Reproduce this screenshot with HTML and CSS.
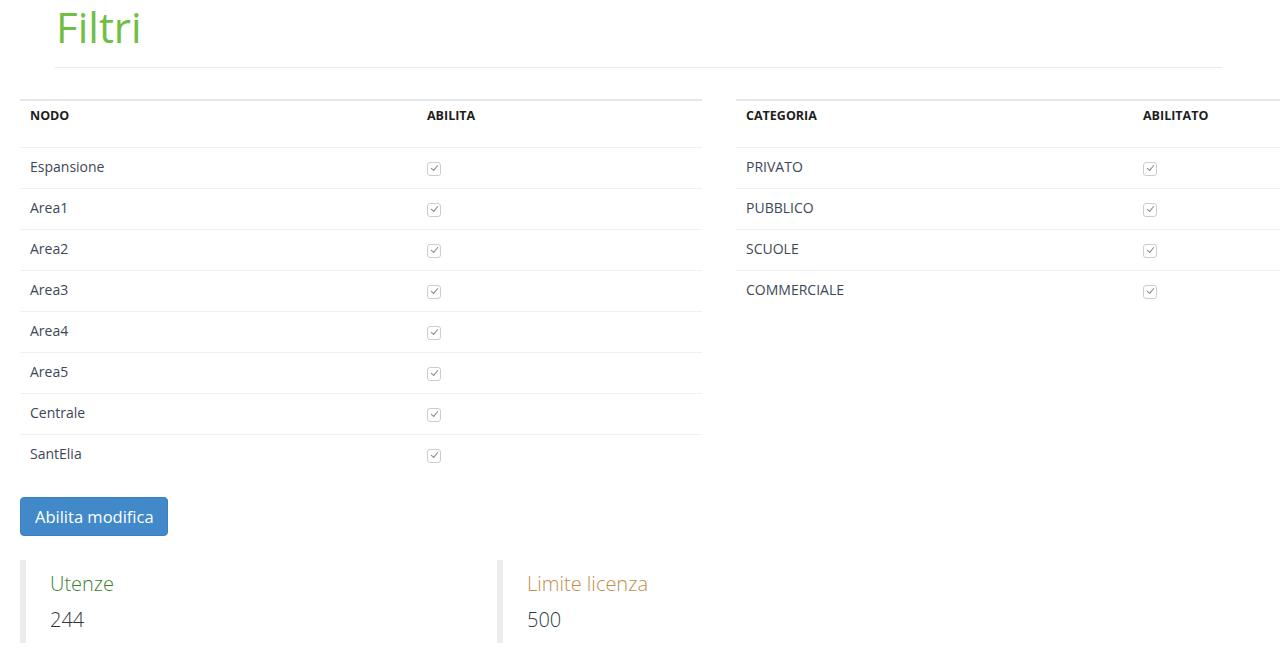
FILE: index.html
```html
<!DOCTYPE html>
<html lang="it">
<head>
<meta charset="utf-8">
<title>Filtri</title>
<link rel="stylesheet" href="styles.css">
</head>
<body>
<div class="page">
  <header class="page-head">
    <h1 class="title">Filtri</h1>
    <hr class="rule">
  </header>

  <div class="tables">
    <table class="grid">
      <thead>
        <tr><th class="c1">NODO</th><th>ABILITA</th></tr>
      </thead>
      <tbody>
        <tr><td class="c1">Espansione</td><td><span class="chk"></span></td></tr>
        <tr><td class="c1">Area1</td><td><span class="chk"></span></td></tr>
        <tr><td class="c1">Area2</td><td><span class="chk"></span></td></tr>
        <tr><td class="c1">Area3</td><td><span class="chk"></span></td></tr>
        <tr><td class="c1">Area4</td><td><span class="chk"></span></td></tr>
        <tr><td class="c1">Area5</td><td><span class="chk"></span></td></tr>
        <tr><td class="c1">Centrale</td><td><span class="chk"></span></td></tr>
        <tr><td class="c1">SantElia</td><td><span class="chk"></span></td></tr>
      </tbody>
    </table>
    <table class="grid">
      <thead>
        <tr><th class="c1">CATEGORIA</th><th>ABILITATO</th></tr>
      </thead>
      <tbody>
        <tr><td class="c1">PRIVATO</td><td><span class="chk"></span></td></tr>
        <tr><td class="c1">PUBBLICO</td><td><span class="chk"></span></td></tr>
        <tr><td class="c1">SCUOLE</td><td><span class="chk"></span></td></tr>
        <tr><td class="c1">COMMERCIALE</td><td><span class="chk"></span></td></tr>
      </tbody>
    </table>
  </div>

  <button class="btn" type="button">Abilita modifica</button>

  <div class="stats">
    <div class="stat">
      <div class="stat-label green">Utenze</div>
      <div class="stat-value">244</div>
    </div>
    <div class="stat">
      <div class="stat-label gold">Limite licenza</div>
      <div class="stat-value navy">500</div>
    </div>
  </div>
</div>
</body>
</html>
```

FILE: styles.css
```css
html, body {
  margin: 0;
  padding: 0;
  background: #fff;
}
body {
  width: 1280px;
  height: 662px;
  overflow: hidden;
  font-family: "Open Sans", "Noto Sans", sans-serif;
  color: #3e4756;
}
.page {
  padding-left: 20px;
}
.page-head {
  padding-left: 35px;
  width: 1167px;
}
.title {
  margin: 4px 0 0 0;
  font-size: 42px;
  line-height: 46px;
  font-weight: 400;
  color: #6fbf45;
  padding-left: 1px;
}
.rule {
  border: 0;
  border-top: 1px solid #e7eaec;
  margin: 17px 0 0 0;
  height: 0;
}
.tables {
  display: flex;
  align-items: flex-start;
  gap: 34px;
  margin-top: 31px;
  overflow: hidden;
}
.grid {
  width: 682px;
  flex: 0 0 682px;
  border-collapse: collapse;
  border-top: 2px solid #e3e8ec;
}
.grid th {
  text-align: left;
  font-size: 12.5px;
  font-weight: 700;
  color: #1e1e1e;
  line-height: 20px;
  padding: 5px 10px 21px;
  border-bottom: 1px solid #eef1f4;
}
.grid td {
  font-size: 14px;
  line-height: 20px;
  padding: 9px 10px 11px;
  border-top: 1px solid #eef1f4;
}
.grid tbody tr:first-child td {
  border-top: 0;
}
.grid .c1 {
  width: 377px;
}
.chk {
  display: inline-block;
  width: 12px;
  height: 12px;
  border: 1px solid #cdcdcd;
  border-radius: 3px;
  vertical-align: middle;
  position: relative;
  top: 1px;
  background: #fff;
}
.chk::after {
  content: "";
  position: absolute;
  left: 3px;
  top: 2px;
  width: 6px;
  height: 3px;
  border-left: 1px solid #888;
  border-bottom: 1px solid #888;
  transform: rotate(-50deg);
  transform-origin: center;
}
.btn {
  display: block;
  margin-top: 22px;
  width: 148px;
  height: 39px;
  padding: 0 14px;
  font-family: "Open Sans", "Noto Sans", sans-serif;
  font-size: 16.5px;
  color: #fff;
  background: #4289ca;
  border: 1px solid #3b7fbf;
  border-radius: 4px;
  text-align: left;
  white-space: nowrap;
}
.stats {
  display: grid;
  grid-template-columns: 477px 477px;
  margin-top: 24px;
}
.stat {
  border-left: 6px solid #ececec;
  padding: 10px 0 10px 24px;
  height: 63px;
}
.stat-label {
  font-size: 20px;
  line-height: 28px;
  font-weight: 300;
}
.stat-value {
  margin-top: 8px;
  font-size: 20px;
  line-height: 28px;
  font-weight: 300;
  color: #333;
}
.green { color: #3f7f35; }
.gold { color: #bf8e4c; }
.navy { color: #2c3a4d; }
```
